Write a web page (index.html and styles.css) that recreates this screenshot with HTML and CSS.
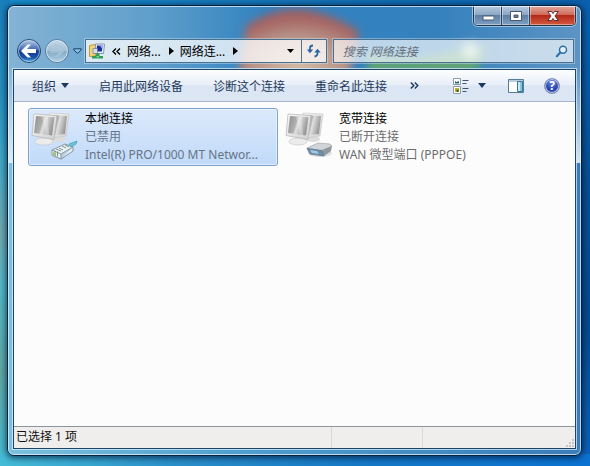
FILE: index.html
```html
<!DOCTYPE html>
<html lang="zh-CN">
<head>
    <meta charset="UTF-8">
    <meta name="viewport" content="width=device-width, initial-scale=1.0">
    <title>网络连接</title>
    <link rel="stylesheet" href="styles.css">
</head>
<body>

    <div class="window">
        <!-- Desktop logo showing through the glass -->
        <svg class="glass-logo" width="300" height="63" viewBox="0 0 300 63" aria-hidden="true">
            <defs>
                <radialGradient id="redGlow" cx="50%" cy="75%" r="65%">
                    <stop offset="0" stop-color="#d3bda8"/>
                    <stop offset="0.6" stop-color="#b79388"/>
                    <stop offset="1" stop-color="#a4605f"/>
                </radialGradient>
                <filter id="soft" x="-20%" y="-20%" width="140%" height="140%"><feGaussianBlur stdDeviation="4"/></filter>
            </defs>
            <g filter="url(#soft)">
                <path d="M29 76 L38 20 Q66 0 100 4 Q126 9 151 25 L140 78 Z" fill="url(#redGlow)"/>
                <path d="M156 74 L162 48 Q205 58 248 44 L280 42 L264 74 Z" fill="#5fa279"/>
                <ellipse cx="262" cy="44" rx="8" ry="8" fill="#b5d8c6"/>
            </g>
        </svg>

        <header class="titlebar">
            <div class="caption">
                <button class="cap-btn cap-min" aria-label="最小化">
                    <svg width="12" height="12" viewBox="0 0 12 12"><rect x="1" y="6" width="11" height="4" fill="#fff" stroke="#46586e"/></svg>
                </button>
                <button class="cap-btn cap-max" aria-label="最大化">
                    <svg width="12" height="12" viewBox="0 0 12 12"><path fill="#fff" stroke="#46586e" fill-rule="evenodd" d="M.5 1.5h11v9H.5zM4 5v2.500h4V5z"/></svg>
                </button>
                <button class="cap-btn cap-close" aria-label="关闭">
                    <svg width="12" height="12" viewBox="0 0 12 12"><path fill="#fff" stroke="#5b3338" d="M.8 1.500h3.700L6 3.600l1.500-2.100h3.700L8 6l3.200 4.500H7.500L6 8.400l-1.500 2.100H.8L4 6z"/></svg>
                </button>
            </div>

            <div class="navbar">
                <div class="travel">
                    <button class="nav-back" aria-label="后退">
                        <svg width="26" height="26" viewBox="0 0 26 26">
                            <defs>
                                <linearGradient id="backFill" x1="0" y1="0" x2="0" y2="1">
                                    <stop offset="0" stop-color="#b9cdea"/>
                                    <stop offset="0.45" stop-color="#3d68b4"/>
                                    <stop offset="0.5" stop-color="#123a8c"/>
                                    <stop offset="0.8" stop-color="#1a55ac"/>
                                    <stop offset="1" stop-color="#5fc3ee"/>
                                </linearGradient>
                            </defs>
                            <circle cx="13" cy="13" r="11.500" fill="url(#backFill)" stroke="#25486f"/>
                            <circle cx="13" cy="13" r="10.500" fill="none" stroke="#d5e6f5" stroke-opacity="0.6"/>
                            <path fill="#fff" d="M5 13l6.500-6.500h3.500l-4 4.500H20v4h-9l4 4.500h-3.500z"/>
                        </svg>
                    </button>
                    <button class="nav-forward" aria-label="前进">
                        <svg width="26" height="26" viewBox="0 0 26 26">
                            <defs>
                                <linearGradient id="forwardFill" x1="0" y1="0" x2="0" y2="1">
                                    <stop offset="0" stop-color="#c3d9e9"/>
                                    <stop offset="0.48" stop-color="#a3c1d8"/>
                                    <stop offset="0.52" stop-color="#84a9c6"/>
                                    <stop offset="1" stop-color="#b0d2e6"/>
                                </linearGradient>
                            </defs>
                            <circle cx="13" cy="13" r="11.500" fill="url(#forwardFill)" stroke="#557a9b"/>
                            <circle cx="13" cy="13" r="10.500" fill="none" stroke="#e2eff8" stroke-opacity="0.7"/>
                            <path fill="#b3ccde" fill-opacity="0.6" stroke="#9dbad0" stroke-opacity="0.5" d="M20.500 13L14 7h-3l3.500 4.500H6v3.200h8.500L11 19h3z"/>
                        </svg>
                    </button>
                    <button class="nav-history" aria-label="最近的页面">
                        <svg width="9" height="6" viewBox="0 0 9 6"><path fill="#8fc1e3" stroke="#173f6b" d="M.8 .8h7.400v1.200L4.500 5.300.8 2z"/></svg>
                    </button>
                </div>

                <div class="address">
                    <svg class="address-icon" width="17" height="17" viewBox="0 0 17 17" aria-hidden="true">
                        <path fill="#f0d476" stroke="#c79a32" d="M.5 2.500l5-1 1 1.500v10l-6 .5z"/>
                        <path fill="#e7effa" stroke="#8693b8" d="M6.500 1h9l-1 9.500H6z"/>
                        <path fill="#1b2d9c" d="M8 2.500h5.500l-.6 6H7.500z"/>
                        <path fill="#a3b6ed" d="M10.500 2.500h3l-.3 3z"/>
                        <path fill="#d7dfec" stroke="#5b6b92" stroke-width=".6" d="M4 5.500h4.500v5H4z"/>
                        <path fill="#2f9c58" d="M7 10.500h3.500V13H14v2.500H3V13h4z"/>
                        <path fill="#7bd39a" d="M7.500 13h2.500v1.500H7.500z"/>
                    </svg>
                    <a class="crumb" href="#" aria-label="上级位置">
                        <svg width="9" height="7" viewBox="0 0 9 7"><path fill="none" stroke="#000" stroke-width="1.400" d="M4 .5l-3 3 3 3M8 .5l-3 3 3 3"/></svg>
                    </a>
                    <a class="crumb" href="#">网络...</a>
                    <svg class="crumb-arrow" width="5" height="8" viewBox="0 0 5 8"><path d="M0 0l5 4-5 4z"/></svg>
                    <a class="crumb" href="#">网络连...</a>
                    <svg class="crumb-arrow" width="5" height="8" viewBox="0 0 5 8"><path d="M0 0l5 4-5 4z"/></svg>
                    <button class="address-drop" aria-label="以前的位置">
                        <svg width="7" height="4" viewBox="0 0 7 4"><path d="M0 0h7L3.500 4z"/></svg>
                    </button>
                    <button class="address-refresh" aria-label="刷新">
                        <svg width="15" height="14" viewBox="0 0 15 14">
                            <path fill="none" stroke="#2b66a8" stroke-width="1.800" d="M7 1.500Q4 1.500 4 4v3M8.500 12.500q3-.5 3-3V7"/>
                            <path fill="#2b66a8" d="M.8 5.500h6.400L4 9.300zM8.300 8.500h6.400L11.500 4.700z"/>
                        </svg>
                    </button>
                </div>

                <form class="search">
                    <input type="text" class="search-input" aria-label="搜索" placeholder="搜索 网络连接">
                    <button type="button" class="search-btn" aria-label="开始搜索">
                        <svg width="13" height="13" viewBox="0 0 13 13">
                            <circle cx="8" cy="4.700" r="3.500" fill="#e6f2fb" stroke="#2d6ea9" stroke-width="1.500"/>
                            <path stroke="#2d6ea9" stroke-width="2" stroke-linecap="round" d="M5.300 7.500L1.800 11.300"/>
                        </svg>
                    </button>
                </form>
            </div>
        </header>

        <div class="client">
            <div class="toolbar">
                <button class="tool">组织
                    <svg width="8" height="5" viewBox="0 0 8 5"><path fill="#1e395b" d="M0 0h8L4 5z"/></svg>
                </button>
                <button class="tool">启用此网络设备</button>
                <button class="tool">诊断这个连接</button>
                <button class="tool">重命名此连接</button>
                <button class="tool tool-more" aria-label="更多命令">
                    <svg width="9" height="7" viewBox="0 0 9 7"><path fill="none" stroke="#1e395b" stroke-width="1.400" d="M.8 .5l3 3-3 3M4.800 .5l3 3-3 3"/></svg>
                </button>

                <div class="tools-right">
                    <button class="icon-tool" aria-label="更改您的视图">
                        <svg width="17" height="16" viewBox="0 0 17 16">
                            <path fill="#fff" stroke="#909aa6" d="M.5 .5h7v6h-7zM.5 8.500h7v7h-7z"/>
                            <path fill="#2c6a78" d="M2 3l1.500 1L6 3v2.500H2z"/>
                            <path fill="#b7b52c" d="M2 10h4v4H2z"/>
                            <path fill="#3b4a20" d="M3 11l1 1.500L5.500 11v3H4z"/>
                            <path stroke="#40556f" d="M9.500 2.500h6M9.500 5.500h4M9.500 10.500h6M9.500 13.500h4"/>
                        </svg>
                    </button>
                    <button class="icon-tool" aria-label="更多选项">
                        <svg width="8" height="5" viewBox="0 0 8 5"><path fill="#1e395b" d="M0 0h8L4 5z"/></svg>
                    </button>
                    <button class="icon-tool pane-tool" aria-label="显示预览窗格">
                        <svg width="16" height="14" viewBox="0 0 16 14">
                            <path fill="#fff" stroke="#557c97" d="M.5 .5h15v13H.5z"/>
                            <path fill="#b8cddd" d="M1 1h14v2H1z"/>
                            <path fill="#82c5dd" stroke="#3b7694" d="M9.500 2.500h5v10h-5z"/>
                            <path fill="#c8ebf5" d="M10 3h2v9h-2z"/>
                        </svg>
                    </button>
                    <button class="icon-tool help-tool" aria-label="获取帮助">
                        <span class="help-mark">?</span>
                    </button>
                </div>
            </div>

            <!-- Connections -->
            <main class="connections">
                <a class="tile selected" href="#">
                    <svg class="tile-icon" width="48" height="52" viewBox="0 0 48 52" aria-hidden="true">
                        <defs>
                            <linearGradient id="screen" x1="0" y1="0" x2="1" y2="0.3">
                                <stop offset="0" stop-color="#8d8d8d"/>
                                <stop offset="0.45" stop-color="#b0b0b0"/>
                                <stop offset="0.55" stop-color="#e0e0e0"/>
                                <stop offset="1" stop-color="#989898"/>
                            </linearGradient>
                            <linearGradient id="bezel" x1="0" y1="0" x2="1" y2="1">
                                <stop offset="0" stop-color="#fafafa"/>
                                <stop offset="1" stop-color="#cfcfcf"/>
                            </linearGradient>
                            <symbol id="monitors" viewBox="0 0 48 52">
                                <ellipse cx="29" cy="29" rx="7" ry="3" fill="#dcdcdc"/>
                                <path fill="url(#bezel)" stroke="#c4c4c4" stroke-width=".6" d="M19 3l20 1-3 22-14 2z"/>
                                <path fill="url(#screen)" d="M21 5l16 1-2 18-11 1z"/>
                                <path fill="#d5d5d5" d="M12 26h6l1 5h-8z"/>
                                <ellipse cx="14" cy="31.500" rx="9" ry="3.500" fill="#ececec" stroke="#cacaca" stroke-width=".7"/>
                                <path fill="url(#bezel)" stroke="#b4b4b4" stroke-width=".7" d="M4 4l23 1.500-3 24-22-4z"/>
                                <path fill="url(#screen)" d="M6 6l18.500 1.300L22 25.500 4 23z"/>
                                <path fill="#fff" fill-opacity=".3" d="M12 6.500l6 .4 1 18-3-.4z"/>
                            </symbol>
                        </defs>
                        <use href="#monitors"/>
                        <path fill="#b4c3ce" fill-opacity=".5" d="M22 47l16-11 7 4-14 10z"/>
                        <path fill="#e9f1f5" stroke="#718692" stroke-width=".8" d="M22 40l13-6 8 3-12 7zM22 40v5l9 4v-5M31 49l12-8v-4"/>
                        <path fill="none" stroke="#667b72" stroke-width=".8" d="M25 40.500v5M27.500 41.500v5M29 38l4 2M32 36l4 2M26 39l5 2M35 35l4 2"/>
                        <path fill="#9dc06a" d="M23 42l3 1.500v2.500l-3-1.500z"/>
                        <path fill="#6fc3d6" stroke="#3e9db5" stroke-width=".7" d="M39 34l8-3-1 3-5 3z"/>
                    </svg>
                    <span class="tile-text">
                        <span class="tile-name">本地连接</span>
                        <span>已禁用</span>
                        <span>Intel(R) PRO/1000 MT Networ...</span>
                    </span>
                </a>

                <a class="tile" href="#">
                    <svg class="tile-icon" width="48" height="52" viewBox="0 0 48 52" aria-hidden="true">
                        <use href="#monitors"/>
                        <ellipse cx="36" cy="43" rx="12" ry="4" fill="#888" fill-opacity=".25"/>
                        <path fill="#d2d5d7" stroke="#979da2" stroke-width=".6" d="M23 38l11-5 12 1 2 2-10 5z"/>
                        <path fill="#90979d" d="M38 40l10-4-1 5-7 5z"/>
                        <path fill="#6c8fae" stroke="#5b7286" stroke-width=".7" d="M23 38.500l15 2 2 5.500-14-2z"/>
                        <path fill="#a9c8df" d="M26 40l7 1 2 3-7-1z"/>
                    </svg>
                    <span class="tile-text">
                        <span class="tile-name">宽带连接</span>
                        <span>已断开连接</span>
                        <span>WAN 微型端口 (PPPOE)</span>
                    </span>
                </a>
            </main>

            <footer class="statusbar">
                <span class="status-main">已选择 1 项</span>
                <span class="status-part"></span>
                <span class="status-grip">
                    <svg width="10" height="10" viewBox="0 0 10 10"><path fill="#c4c4c4" d="M7 1h2v2H7zM4 4h2v2H4zM7 4h2v2H7zM1 7h2v2H1zM4 7h2v2H4zM7 7h2v2H7z"/></svg>
                </span>
            </footer>
        </div>
    </div>

</body>
</html>
```

FILE: styles.css
```css
* { box-sizing: border-box; }
body {
    margin: 0;
    padding: 5px 8px 10px 7px;
    min-height: 100vh;
    display: flex;
    font-family: "Noto Sans", "Noto Sans CJK SC", sans-serif;
    font-size: 12px;
    background:
        linear-gradient(to right, #45bcd6, #2a8fca 30%, #1679c6 60%, #0b72d2) left bottom / 100% 12px no-repeat,
        linear-gradient(to bottom, #1a7fbd, #2690c0 20%, #3fa9c8 34%, #6fabb0 50%, #52b9c8 62%, #5fa9a4 80%, #45bcd6) left top / 10px 100% no-repeat,
        linear-gradient(to bottom, #0a62ae, #084f94 40%, #06498e 70%, #0b64bc) right top / 10px 100% no-repeat,
        linear-gradient(to right, #178fcf, #1679bb 40%, #0b62ae);
}
button {
    margin: 0;
    padding: 0;
    border: 0;
    background: none;
    font: inherit;
    color: inherit;
    display: flex;
    align-items: center;
    justify-content: center;
}
a {
    color: inherit;
    text-decoration: none;
}
svg {
    display: block;
    flex: none;
}

/* Window frame */
.window {
    position: relative;
    flex: 1;
    min-width: 0;
    display: flex;
    flex-direction: column;
    padding: 0 5px 6px;
    border: 1px solid #08223c;
    border-radius: 7px;
    overflow: hidden;
    background:
        linear-gradient(to bottom, transparent 60px, rgba(255, 255, 255, 0.75) 157px, transparent 157px),
        linear-gradient(to right, #7cc0dd, #4f9fcf 40%, #3a7cb8) left bottom / 100% calc(100% - 157px) no-repeat,
        linear-gradient(to right, #84b3d5, #5f9fcb 25%, #3182c0 45%, #3581be 75%, #5d94c3);
    box-shadow: 0 1px 6px 1px rgba(0, 20, 50, 0.7);
}
.window::after {
    content: "";
    position: absolute;
    inset: 0;
    border: 1px solid rgba(225, 243, 255, 0.75);
    border-radius: 6px;
    pointer-events: none;
}
.glass-logo {
    position: absolute;
    top: 0;
    left: 200px;
}
.titlebar {
    position: relative;
    padding-bottom: 5px;
}

/* Caption buttons */
.caption {
    width: 103px;
    height: 20px;
    margin-left: auto;
    display: flex;
    border: 1px solid #23384f;
    border-top: 0;
    border-radius: 0 0 5px 5px;
    overflow: hidden;
    box-shadow: 0 0 0 1px rgba(220, 238, 252, 0.55);
}
.cap-btn {
    width: 28px;
    background: linear-gradient(to bottom, #b9cade, #8ba7c5 45%, #5e7fa5 50%, #7d9fc2);
    box-shadow: inset 0 0 0 1px rgba(255, 255, 255, 0.4);
    border-right: 1px solid #2c4259;
}
.cap-close {
    flex: 1;
    border-right: 0;
    background: linear-gradient(to bottom, #e4a69b, #cf6d5c 45%, #b5291a 50%, #d25a3c);
}

/* Navigation row */
.navbar {
    display: flex;
    align-items: center;
    margin-top: 12px;
    padding: 0 2px 0 3px;
}
.travel {
    display: flex;
    align-items: center;
    gap: 2px;
    width: 69px;
    flex: none;
}
.nav-history { margin-left: 1px; }
.address, .search {
    min-width: 0;
    display: flex;
    align-items: center;
    height: 24px;
    border: 1px solid #466f90;
    background: rgba(255, 255, 255, 0.76);
    box-shadow: 0 0 0 1px rgba(220, 238, 250, 0.4);
}
.address {
    flex: 21;
    padding-left: 3px;
}
.crumb {
    margin-left: 6px;
    white-space: nowrap;
}
.crumb-arrow { margin-left: 8px; }
.address-drop {
    width: 20px;
    height: 100%;
    margin-left: auto;
}
.address-refresh {
    width: 25px;
    height: 100%;
    border-left: 1px solid #54738d;
}
.search {
    flex: 20;
    margin-left: 6px;
    padding: 0 5px 0 9px;
    background: rgba(255, 255, 255, 0.68);
}
.search-input {
    flex: 1;
    min-width: 0;
    padding: 0;
    border: 0;
    outline: 0;
    background: none;
    font: inherit;
    font-style: italic;
}
.search-input::placeholder {
    color: #66727c;
    opacity: 1;
}

/* Client area */
.client {
    position: relative;
    flex: 1;
    display: flex;
    flex-direction: column;
    border: 1px solid #1c4568;
    background: #fcfcfc;
    box-shadow: 0 0 0 1px rgba(215, 238, 252, 0.75);
}
.toolbar {
    display: flex;
    align-items: center;
    height: 32px;
    padding: 0 15px 0 3px;
    color: #1e395b;
    background: linear-gradient(to bottom, #fdfeff, #e8eef8 48%, #dbe5f3 52%, #dce7f5);
    border-bottom: 1px solid #a5b5c9;
}
.tool {
    padding: 0 15px;
    gap: 5px;
    height: 100%;
    white-space: nowrap;
}
.tool-more { padding: 0 8px; }
.tools-right {
    margin-left: auto;
    display: flex;
    align-items: center;
    gap: 8px;
}
.pane-tool { margin-left: 14px; }
.help-tool {
    margin-left: 12px;
    width: 16px;
    height: 16px;
    border: 1px solid #8592b5;
    border-radius: 50%;
    background: radial-gradient(circle at 50% 25%, #6d8be0, #2540a8 60%, #4a70d0);
    box-shadow: inset 0 0 0 1px #b9c8ec;
}
.help-mark {
    color: #fff;
    font-weight: bold;
    line-height: 14px;
}

/* Connection tiles */
.connections {
    flex: 1;
    display: grid;
    grid-template-columns: repeat(auto-fill, 250px);
    align-content: start;
    gap: 4px;
    padding: 6px 14px;
}
.tile {
    display: flex;
    height: 58px;
    padding: 1px;
    gap: 7px;
    border: 1px solid transparent;
    border-radius: 3px;
    color: #6d6d6d;
    line-height: 18px;
}
.tile.selected {
    border-color: #7da2ce;
    background: linear-gradient(to bottom, #dce9fb, #c1daf9);
    box-shadow: inset 0 0 0 1px rgba(255, 255, 255, 0.45);
}
.tile-text {
    display: flex;
    flex-direction: column;
    white-space: nowrap;
}
.selected .tile-text { color: #667486; }
.tile .tile-name { color: #000; }

/* Status bar */
.statusbar {
    display: flex;
    align-items: stretch;
    height: 22px;
    border-top: 1px solid #8b949d;
    background: #f0eeed;
    color: #111;
    line-height: 20px;
}
.status-main {
    flex: 1;
    padding-left: 2px;
}
.status-part {
    width: 91px;
    border-left: 1px solid #dad8d7;
}
.status-grip {
    width: 153px;
    display: flex;
    align-items: flex-end;
    justify-content: flex-end;
    border-left: 1px solid #dad8d7;
}
```
